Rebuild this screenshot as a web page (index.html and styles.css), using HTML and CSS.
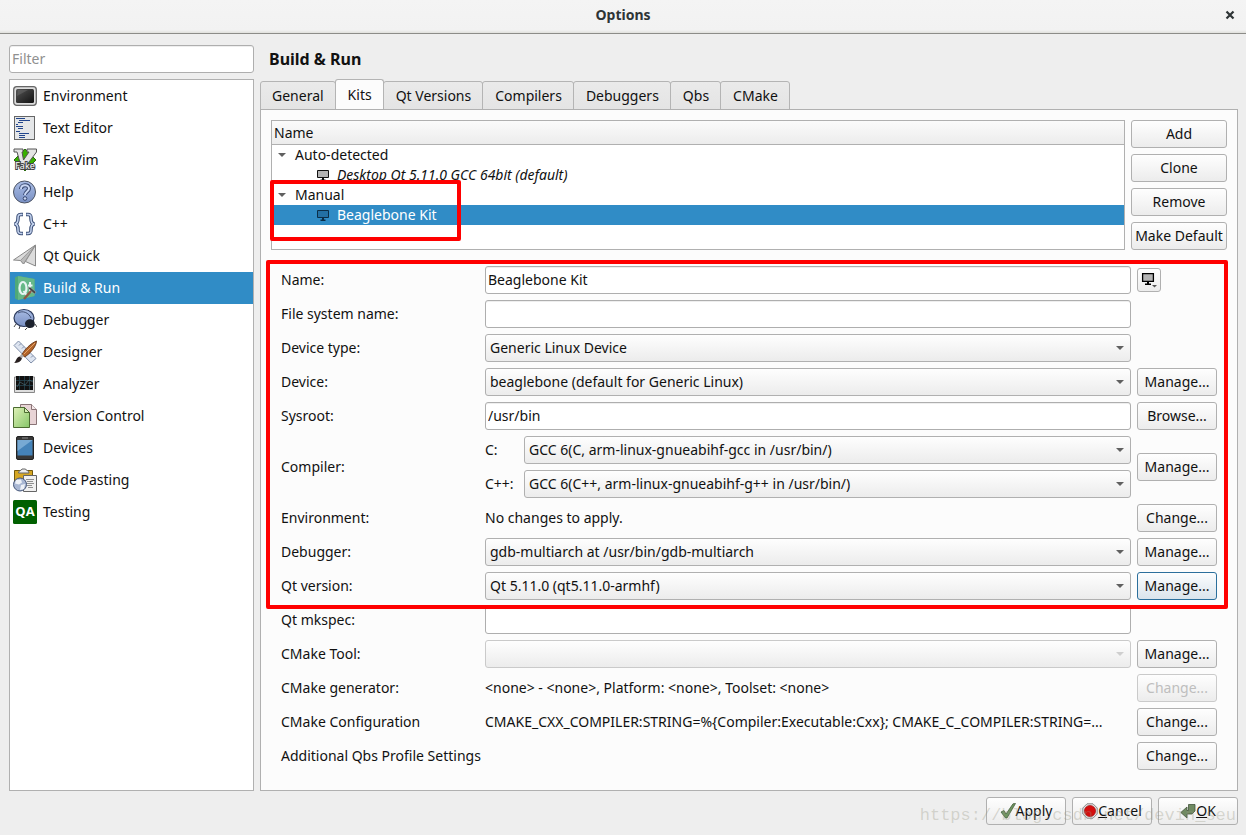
FILE: index.html
```html
<!DOCTYPE html>
<html lang="en">
<head>
<meta charset="utf-8">
<title>Options</title>
<link rel="stylesheet" href="styles.css">
</head>
<body>
<header class="titlebar">
  <h1 class="titlebar-text">Options</h1>
  <button class="close" type="button" aria-label="Close"><svg width="10" height="10" viewBox="0 0 10 10"><path d="M1.500 1.500l7 7M8.500 1.500l-7 7" stroke="#2e3436" stroke-width="2.200" fill="none"/></svg></button>
</header>

<main class="dialog">
  <nav class="sidebar">
    <input class="field filter" type="text" placeholder="Filter" aria-label="Filter">
    <ul class="categories">
      <li class="category"><svg class="cat-icon" viewBox="0 0 24 24"><defs><linearGradient id="scr" x1="0" y1="0" x2="1" y2="1"><stop offset="0" stop-color="#555"/><stop offset="1" stop-color="#111"/></linearGradient></defs><rect x="0.7" y="2.7" width="22.6" height="18.6" rx="3" fill="#ddd" stroke="#666" stroke-width="1.3"/><rect x="3" y="5" width="18" height="14" rx="1.5" fill="url(#scr)"/><path d="M4 12L15 6H5z" fill="#777" opacity=".4"/></svg>Environment</li>
      <li class="category"><svg class="cat-icon" viewBox="0 0 24 24"><rect x="1.5" y=".5" width="20" height="23" fill="#e4e6e8" stroke="#666"/><path d="M3 2.500h9M6 4.500h11M5 6.500h5M3 8.500h2M3 10.500h7M5 12.500h5M3 15.500h4M6 17.500h10M6 19.500h6M6 21.500h6" stroke="#23468c" stroke-width="1"/></svg>Text Editor</li>
      <li class="category"><svg class="cat-icon" viewBox="0 0 24 24"><path d="M12 1l11 11-11 11L1 12z" fill="#38b000" stroke="#2b6b10"/><path d="M1 1h9v3H9l1.500 8L16 4h-2V1h9.500v3L13 18H8L4 4H1z" fill="#e4e4e4" stroke="#555"/><text class="fake-text" x="12" y="21" text-anchor="middle">Fake</text></svg>FakeVim</li>
      <li class="category"><svg class="cat-icon" viewBox="0 0 24 24"><defs><linearGradient id="blue" x1="0" y1="0" x2="0" y2="1"><stop offset="0" stop-color="#a9bce4"/><stop offset="1" stop-color="#7990c4"/></linearGradient></defs><circle cx="11.500" cy="12" r="11" fill="url(#blue)" stroke="#4c5362"/><path d="M8 9c0-5 8-5 8-.5 0 3-4 3-4 6.500" fill="none" stroke="#36466e" stroke-width="4"/><path d="M8 9c0-5 8-5 8-.5 0 3-4 3-4 6.500" fill="none" stroke="#c9d7f4" stroke-width="2"/><circle cx="12" cy="18.500" r="1.800" fill="#c9d7f4" stroke="#36466e"/></svg>Help</li>
      <li class="category"><svg class="cat-icon" viewBox="0 0 24 24"><g fill="none" stroke="#3d5078" stroke-width="3.600"><path d="M10 2.500H8C5 2.500 5 4 5 6.500S5 11.500 1.500 12C5 12.500 5 15 5 17.500S5 21.500 8 21.500h2"/><path d="M13 2.500h2c3 0 3 1.500 3 4s0 5 3.500 5.500C18 12.500 18 15 18 17.500s0 4-3 4h-2"/></g><g fill="none" stroke="#c5d4ef" stroke-width="1.500"><path d="M9.500 2.500H8C5 2.500 5 4 5 6.500S5 11.500 2 12C5 12.500 5 15 5 17.500S5 21.500 8 21.500h1.500"/><path d="M13.500 2.500H15c3 0 3 1.500 3 4s0 5 3 5.500C18 12.500 18 15 18 17.500s0 4-3 4h-1.500"/></g></svg>C++</li>
      <li class="category"><svg class="cat-icon" viewBox="0 0 24 24"><path d="M22.500 1L.500 16l7 .5 3 3.500 2-2.500 10 4.500z" fill="#dcdcdc" stroke="#888"/><path d="M22.500 1L7.500 16.500l3 3.500zM22.500 1L12.500 17.500" fill="#bbb" stroke="#8d8d8d" stroke-width=".8"/></svg>Qt Quick</li>
      <li class="category selected" aria-current="page"><svg class="cat-icon" viewBox="0 0 24 24"><path d="M2 1.500L5 0l16.500 3v17L5 24l-3-1.500z" fill="#4fa878"/><path d="M5 0l16.500 3v17L5 24z" fill="#65b888"/><ellipse cx="10" cy="12" rx="3.500" ry="6" fill="none" stroke="#e6f4f4" stroke-width="2.200"/><path d="M10.500 15l3.500 4.500M17 6v9.500h2M15 9.500h4.500" fill="none" stroke="#e6f4f4" stroke-width="2"/><path d="M11 23l8-9" stroke="#8a5a44" stroke-width="2.500"/><path d="M15 12l2-1 6 5-1.500 2z" fill="#444" stroke="#bbb" stroke-width=".5"/></svg>Build &amp; Run</li>
      <li class="category"><svg class="cat-icon" viewBox="0 0 24 24"><path d="M3 16l-2 3M7 18l-1 3M22 16l2 3M14 20l-2 2" stroke="#444" stroke-width="1"/><ellipse cx="11" cy="10" rx="10" ry="8.500" fill="url(#blue)" stroke="#2c3a5c" stroke-width="1.200"/><path d="M5 5c5-3 11 0 13 5" stroke="#2c3a5c" fill="none" stroke-width=".8"/><path d="M12 15c1-4 6-5 9-2 2 4 0 7-4 7-3 0-5-2-5-5z" fill="#1c222e"/></svg>Debugger</li>
      <li class="category"><svg class="cat-icon" viewBox="0 0 24 24"><path d="M5.500 1L23 18.500 18 23 1 5.500z" fill="#dde4f0" stroke="#8190aa"/><path d="M8 3.500L6 5.500M11 6.500L9 8.500M14 9.500l-2 2M17 12.500l-2 2M20 15.500l-2 2" stroke="#8190aa"/><path d="M23.500 1c0 6-8 14-12 16l-2.500-2.500C11 10 18 3 23.500 1z" fill="#b2642a" stroke="#5a2b0c" stroke-width=".8"/><path d="M22 3L11 14" stroke="#e3a36b"/><path d="M10.500 15.500l-2-1.500-2 2.500 2.500 2z" fill="#aaa"/><path d="M6.500 16.500l2.500 2c-1 3-4 4.500-8 4.500 2-1 2-5.500 5.500-6.500z" fill="#282020"/></svg>Designer</li>
      <li class="category"><svg class="cat-icon" viewBox="0 0 24 24"><path d="M1.500 5h20v15.500h-20z" fill="#ddd" stroke="#888"/><path d="M3 4h17v14H3z" fill="#111"/><path d="M3 8.500h17M3 13.500h17M6.500 4v14M11.500 4v14M16.500 4v14" stroke="#24444f" stroke-width=".8"/><path d="M4 15l3-5 5 3 4-5 4 2" stroke="#54767f" stroke-width=".6" fill="none"/></svg>Analyzer</li>
      <li class="category"><svg class="cat-icon" viewBox="0 0 24 24"><path d="M7.500.5h11l5 5v15h-16z" fill="#e8d4d6" stroke="#8a7477"/><path d="M18.500.5v5h5" fill="#f5e9ea" stroke="#8a7477"/><defs><linearGradient id="grn" x1="0" y1="0" x2="1" y2="1"><stop offset="0" stop-color="#e0f1b8"/><stop offset="1" stop-color="#86c668"/></linearGradient></defs><path d="M.5 3.500h11l5 5v15H.500z" fill="url(#grn)" stroke="#4b6b30"/><path d="M11.500 3.500v5h5z" fill="#d8efb6" stroke="#4b6b30"/></svg>Version Control</li>
      <li class="category"><svg class="cat-icon" viewBox="0 0 24 24"><rect x="3.500" y=".5" width="17" height="23" rx="1.500" fill="#383838" stroke="#222"/><path d="M4.500 4h15v15.500h-15z" fill="#4583b9"/><path d="M4.500 4h15L4.500 15z" fill="#77a9d3"/><path d="M9 2h6" stroke="#888"/></svg>Devices</li>
      <li class="category"><svg class="cat-icon" viewBox="0 0 24 24"><path d="M1.500 2.500h18v15h-18z" fill="#d6a723" stroke="#73590d"/><path d="M5.500 5c0-3 3-2 3.500-4h3.500c.5 2 3.500 1 3.500 4z" fill="#eee" stroke="#666"/><path d="M10.500 7.500h13v16h-13z" fill="#f1f1f1" stroke="#666"/><path d="M13 11.500h8M14 13.500h6M13 15.500h8M14 17.500h5M15 19.500h5" stroke="#777" stroke-width=".8"/><circle cx="7" cy="16.500" r="6.500" fill="#a9b7d3" stroke="#455679"/><path d="M3 12l5-.5 1 3-3 2-4-1zM8 17l4-1-1 5-4 1z" fill="#eef1f7"/></svg>Code Pasting</li>
      <li class="category"><svg class="cat-icon" viewBox="0 0 24 24"><rect width="24" height="24" rx="1.500" fill="#006000"/><text class="qa-text" x="12" y="16" text-anchor="middle">QA</text></svg>Testing</li>
    </ul>
  </nav>

  <section class="page">
    <h2 class="page-title">Build &amp; Run</h2>
    <div class="tabs" role="tablist">
      <button class="tab" type="button" role="tab">General</button>
      <button class="tab active" type="button" role="tab" aria-selected="true">Kits</button>
      <button class="tab" type="button" role="tab">Qt Versions</button>
      <button class="tab" type="button" role="tab">Compilers</button>
      <button class="tab" type="button" role="tab">Debuggers</button>
      <button class="tab" type="button" role="tab">Qbs</button>
      <button class="tab" type="button" role="tab">CMake</button>
    </div>
    <div class="panel" role="tabpanel">
      <div class="kits">
        <div class="tree" role="tree">
          <div class="tree-header">Name</div>
          <div class="tree-row group" role="treeitem">Auto-detected</div>
          <div class="tree-row leaf auto" role="treeitem"><svg class="monitor" viewBox="0 0 12 12"><path d="M.5 1.500h11v7H.500z" fill="#b4b4b4" stroke="#111"/><path d="M5 9h2v1.500h1.500V12h-5v-1.500H5z" fill="#111"/></svg>Desktop Qt 5.11.0 GCC 64bit (default)</div>
          <div class="tree-row group" role="treeitem">Manual</div>
          <div class="tree-row leaf current" role="treeitem" aria-selected="true"><svg class="monitor" viewBox="0 0 12 12"><path d="M.5 1.500h11v7H.500z" fill="#2370a4" stroke="#0b2e48"/><path d="M5 9h2v1.500h1.500V12h-5v-1.500H5z" fill="#0b2e48"/></svg>Beaglebone Kit</div>
          <span class="mark mark-kit"></span>
        </div>
        <div class="kit-buttons">
          <button class="btn" type="button">Add</button>
          <button class="btn" type="button">Clone</button>
          <button class="btn" type="button">Remove</button>
          <button class="btn" type="button">Make Default</button>
        </div>
      </div>

      <form class="form">
        <label for="name">Name:</label>
        <input class="field" id="name" type="text" value="Beaglebone Kit">
        <button class="btn icon-btn" type="button" aria-label="Kit icon"><svg width="16" height="16" viewBox="0 0 16 16"><path d="M1.600 1.600h10.800v7.800H1.600z" fill="#b4b4b4" stroke="#000" stroke-width="1.300"/><path d="M6 10h2v1.500h2V13H4v-1.500h2z" fill="#000"/><path d="M11 13h5l-2.500 2.500z" fill="#555"/></svg></button>

        <label for="fsname">File system name:</label>
        <input class="field" id="fsname" type="text"><span></span>

        <label for="devtype">Device type:</label>
        <span class="combo"><select id="devtype"><option>Generic Linux Device</option></select></span><span></span>

        <label for="device">Device:</label>
        <span class="combo"><select id="device"><option>beaglebone (default for Generic Linux)</option></select></span>
        <button class="btn" type="button">Manage...</button>

        <label for="sysroot">Sysroot:</label>
        <input class="field" id="sysroot" type="text" value="/usr/bin">
        <button class="btn" type="button">Browse...</button>

        <span>Compiler:</span>
        <div class="compilers">
          <label for="cc">C:</label>
          <span class="combo"><select id="cc"><option>GCC 6(C, arm-linux-gnueabihf-gcc in /usr/bin/)</option></select></span>
          <label for="cxx">C++:</label>
          <span class="combo"><select id="cxx"><option>GCC 6(C++, arm-linux-gnueabihf-g++ in /usr/bin/)</option></select></span>
        </div>
        <button class="btn" type="button">Manage...</button>

        <span>Environment:</span><span>No changes to apply.</span>
        <button class="btn" type="button">Change...</button>

        <label for="debugger">Debugger:</label>
        <span class="combo"><select id="debugger"><option>gdb-multiarch at /usr/bin/gdb-multiarch</option></select></span>
        <button class="btn" type="button">Manage...</button>

        <label for="qtver">Qt version:</label>
        <span class="combo"><select id="qtver"><option>Qt 5.11.0 (qt5.11.0-armhf)</option></select></span>
        <button class="btn focused" type="button">Manage...</button>

        <label for="mkspec">Qt mkspec:</label>
        <input class="field" id="mkspec" type="text"><span></span>

        <label for="cmake">CMake Tool:</label>
        <span class="combo disabled"><select id="cmake" disabled><option></option></select></span>
        <button class="btn" type="button">Manage...</button>

        <span>CMake generator:</span><span>&lt;none&gt; - &lt;none&gt;, Platform: &lt;none&gt;, Toolset: &lt;none&gt;</span>
        <button class="btn" type="button" disabled>Change...</button>

        <span>CMake Configuration</span><span class="clip">CMAKE_CXX_COMPILER:STRING=%{Compiler:Executable:Cxx}; CMAKE_C_COMPILER:STRING=...</span>
        <button class="btn" type="button">Change...</button>

        <span class="wide-label">Additional Qbs Profile Settings</span>
        <button class="btn" type="button">Change...</button>
        <span class="mark mark-form"></span>
      </form>
    </div>
  </section>
</main>

<footer class="actions">
  <button class="btn" type="button"><svg width="16" height="16" viewBox="0 0 16 16"><path d="M1 9l3-1.500L6 11 13 .8l2.500-.3L7 15H5.500z" fill="#6f9460" stroke="#48613e" stroke-width=".8"/></svg><span>Apply</span></button>
  <button class="btn" type="button"><svg width="16" height="16" viewBox="0 0 16 16"><path d="M5 .8h6L15.200 5v6L11 15.200H5L.8 11V5z" fill="#e4e4e4" stroke="#888"/><circle cx="8" cy="8" r="5.600" fill="#d40e0e" stroke="#980808" stroke-width=".6"/></svg><span><u>C</u>ancel</span></button>
  <button class="btn" type="button"><svg width="16" height="16" viewBox="0 0 16 16"><path d="M8.500 1.500h6.500v6.500l-3 3H7v4L.8 9.500 7 4v3.500h1.500z" fill="#6f8a62" stroke="#41533a" stroke-width=".8"/></svg><span><u>O</u>K</span></button>
  <span class="watermark">https://blog.csdn.net/devin_seu</span>
</footer>
</body>
</html>
```
FILE: styles.css
```css
* { box-sizing: border-box; }

body {
  margin: 0;
  min-height: 100vh;
  display: flex;
  flex-direction: column;
  background: #eeeeee;
  color: #111;
  font: 14px/20px "Noto Sans", sans-serif;
}

button, input, select { font: inherit; color: inherit; }

.titlebar {
  display: grid;
  grid-template-columns: 32px 1fr 32px;
  align-items: center;
  height: 34px;
  padding-bottom: 4px;
  background: linear-gradient(#f4f4f4, #f2f2f2 30px, #e0e0dc);
  border-bottom: 1px solid #8c8c88;
}

.titlebar-text {
  grid-column: 2;
  margin: 0;
  font-size: 14px;
  line-height: 20px;
  text-align: center;
  color: #2e3436;
}

.close {
  display: flex;
  justify-content: center;
  padding: 0;
  border: 0;
  background: none;
}

.dialog {
  flex: 1;
  display: grid;
  grid-template-columns: 245px 1fr;
  gap: 6px;
  padding: 11px 8px 6px 9px;
}

.sidebar {
  display: flex;
  flex-direction: column;
  gap: 6px;
}

.field {
  width: 100%;
  min-width: 0;
  height: 28px;
  padding: 0 2px 2px;
  border: 1px solid #aeaeae;
  border-radius: 3px;
  background: #fff;
  box-shadow: inset 0 1px #eee;
}

.filter::placeholder { color: #909090; opacity: 1; }

.categories {
  flex: 1;
  margin: 0;
  padding: 0;
  list-style: none;
  background: #fff;
  border: 1px solid #b0b0b0;
}

.category {
  display: flex;
  align-items: center;
  gap: 6px;
  height: 32px;
  padding-left: 3px;
}

.cat-icon { width: 24px; height: 24px; }

.selected, .current { background: #308cc6; color: #fff; }

.fake-text {
  font: 9px "Noto Sans", sans-serif;
  fill: #fff;
  stroke: #444;
  stroke-width: 2px;
  paint-order: stroke;
}

.qa-text { font: bold 13px "Open Sans", sans-serif; fill: #fff; }

.page { display: flex; flex-direction: column; min-width: 0; }

.page-title {
  margin: 0;
  padding: 4px 9px 6px;
  font-size: 16px;
  line-height: 20px;
  height: 34px;
}

.tabs {
  display: flex;
  align-items: flex-end;
  height: 31px;
  margin-bottom: -1px;
}

.tab {
  height: 29px;
  margin-left: -1px;
  padding: 0 11px 0 12px;
  border: 1px solid #b4b4b4;
  border-radius: 3px 3px 0 0;
  background: linear-gradient(#eaeaea, #e4e4e4);
}

.tab:first-child { margin-left: 0; padding-left: 11px; }

.tab.active {
  height: 31px;
  background: #fcfcfc;
  border-bottom-color: #fcfcfc;
}

.panel {
  flex: 1;
  padding: 10px;
  background: #fcfcfc;
  border: 1px solid #b0b0b0;
}

.kits {
  display: grid;
  grid-template-columns: 1fr 96px;
  gap: 6px;
}

.kit-buttons { display: grid; gap: 6px; }

.tree {
  position: relative;
  background: #fff;
  border: 1px solid #b0b0b0;
}

.tree-header {
  height: 24px;
  padding: 2px;
  background: linear-gradient(#fbfbfb, #ececec);
  border-bottom: 1px solid #b0b0b0;
}

.tree-row {
  display: flex;
  align-items: center;
  height: 20px;
}

.group { gap: 9px; padding-left: 6px; }

.group::before {
  content: "";
  border: 4px solid transparent;
  border-top-color: #606060;
  border-bottom: 0;
}

.leaf { gap: 8px; padding-left: 45px; }
.auto { font-style: italic; }
.monitor { width: 12px; height: 12px; }

.btn {
  display: flex;
  align-items: center;
  justify-content: center;
  width: 100%;
  height: 28px;
  padding: 0;
  border: 1px solid #b0b0b0;
  border-radius: 3px;
  background: linear-gradient(#fefefe, #ececec);
  white-space: nowrap;
}

.btn:disabled { color: #bebebe; border-color: #cacaca; }
.focused { border-color: #2b6f9c; background: linear-gradient(#fcfdfe, #dae4ec); }
.icon-btn { width: 24px; height: 24px; }

.form {
  position: relative;
  display: grid;
  grid-template-columns: 198px 1fr 80px;
  grid-auto-rows: minmax(28px, auto);
  align-items: center;
  gap: 6px;
  padding: 16px 10px 9px;
}

.wide-label { grid-column: 1 / 3; white-space: nowrap; }

.compilers {
  display: grid;
  grid-template-columns: 33px 1fr;
  align-items: center;
  gap: 6px;
}

.combo { position: relative; display: block; min-width: 0; }

.combo::after {
  content: "";
  position: absolute;
  top: 12px;
  right: 7px;
  border: 4px solid transparent;
  border-top-color: #606060;
  border-bottom: 0;
}

.combo select {
  display: block;
  width: 100%;
  height: 28px;
  padding: 0 20px 0 4px;
  border: 1px solid #b0b0b0;
  border-radius: 3px;
  background: linear-gradient(#fefefe, #ececec);
  appearance: none;
  opacity: 1;
}

.combo.disabled select { border-color: #cacaca; }
.combo.disabled::after { border-top-color: #cfcfcf; }

.clip { min-width: 0; overflow: hidden; white-space: nowrap; }

.mark {
  position: absolute;
  border: 4px solid #f00;
  border-radius: 2px;
  pointer-events: none;
}

.mark-kit { top: 59px; left: -2px; width: 191px; height: 61px; }

.mark-form {
  grid-area: 1 / 1 / 10 / 4;
  inset: -6px -11px -9px -15px;
}

.actions {
  position: relative;
  display: flex;
  justify-content: flex-end;
  gap: 6px;
  padding: 0 8px 10px;
}

.actions .btn { width: 80px; }

.watermark {
  position: absolute;
  right: 10px;
  bottom: 9px;
  color: rgba(150, 150, 130, 0.32);
  font: 17px/20px "Liberation Mono", monospace;
  pointer-events: none;
}
```
